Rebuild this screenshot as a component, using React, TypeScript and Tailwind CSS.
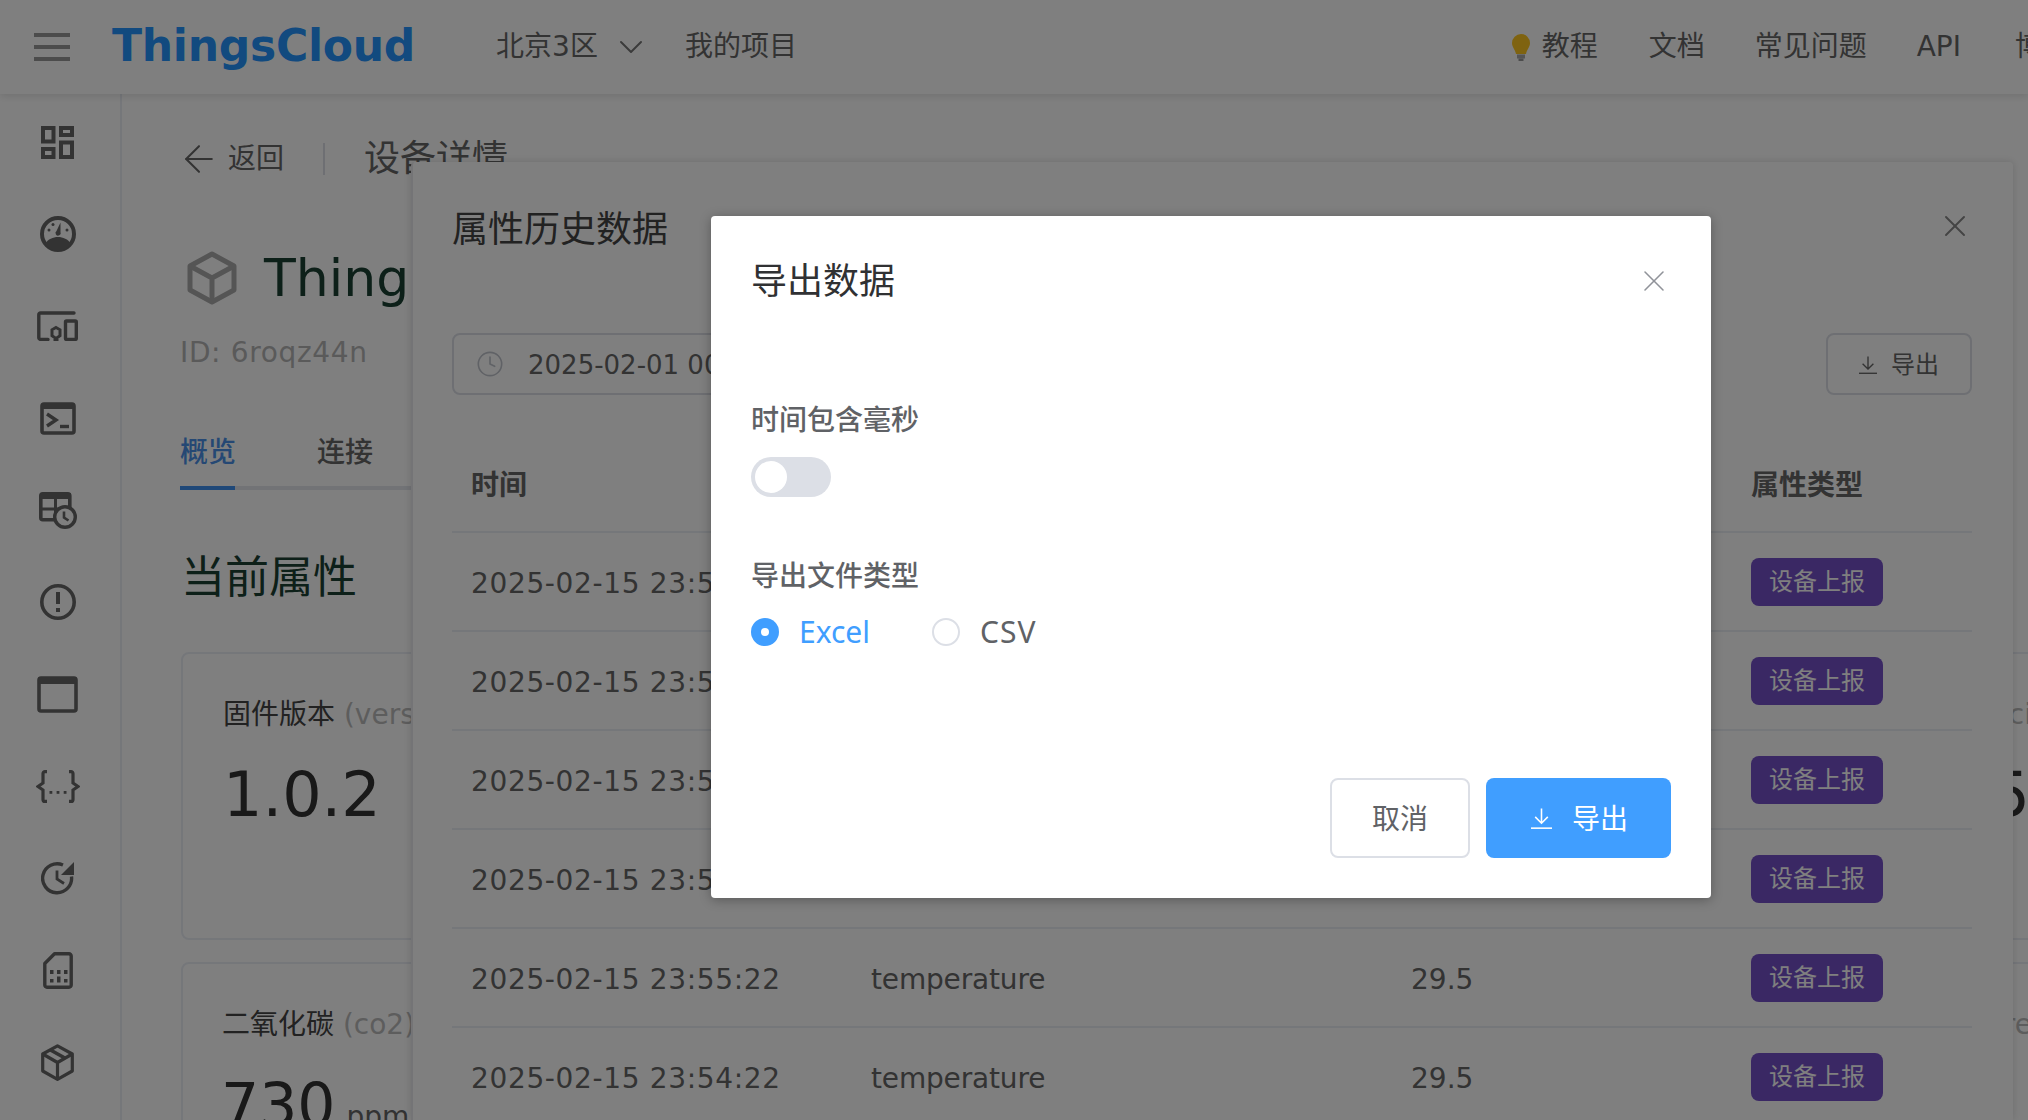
import { ChevronDown, X, ArrowLeft, Clock } from "lucide-react"

const sidebarIcons = [
  <svg key="dash" width="33" height="33" viewBox="0 0 33 33" fill="none" stroke="#666" strokeWidth="4">
    <rect x="2" y="2" width="10.5" height="13.5" />
    <rect x="20" y="2" width="11" height="7" />
    <rect x="2" y="23" width="10.5" height="8" />
    <rect x="20" y="16.5" width="11" height="14.5" />
  </svg>,
  <svg key="gauge" width="36" height="36" viewBox="0 0 36 36" fill="none">
    <circle cx="18" cy="18" r="16" stroke="#666" strokeWidth="4" />
    <path d="M5 28c3-5 8-7 13-7s10 2 13 7c-3 4-8 7-13 7S8 32 5 28z" fill="#666" />
    <path d="M16.500 15 20.500 6.500 20.500 16a2.600 2.600 0 1 1-4-1z" fill="#666" />
    <circle cx="9" cy="14" r="1.500" fill="#666" />
    <circle cx="13" cy="8.500" r="1.500" fill="#666" />
    <circle cx="27" cy="14" r="1.500" fill="#666" />
  </svg>,
  <svg key="devices" width="41" height="30" viewBox="0 0 41 30" fill="none" stroke="#666" strokeWidth="3.400">
    <path d="M37 2H3.500a1.700 1.700 0 0 0-1.700 1.700v23a1.700 1.700 0 0 0 1.700 1.700H11" strokeLinecap="round" />
    <rect x="28.500" y="10" width="10.800" height="18.400" rx="1" />
    <path d="M19 16.500l4 2.300v6l-3 2v2h-2v-2l-3-2v-6z" strokeWidth="3" />
  </svg>,
  <svg key="terminal" width="36" height="33" viewBox="0 0 36 33" fill="none">
    <rect x="2" y="2" width="32" height="29" rx="2" stroke="#666" strokeWidth="3.600" />
    <rect x="2" y="1" width="32" height="6" fill="#666" />
    <path d="M7 12l9 6-9 6" stroke="#666" strokeWidth="3.400" />
    <path d="M20 24.500h9" stroke="#666" strokeWidth="3.400" />
  </svg>,
  <svg key="history-table" width="38" height="37" viewBox="0 0 38 37" fill="none">
    <rect x="1.800" y="1.800" width="29" height="26" rx="2" stroke="#666" strokeWidth="3.600" />
    <rect x="1" y="1" width="31" height="6" fill="#666" />
    <path d="M2 17h26M16.500 3v25" stroke="#666" strokeWidth="3" />
    <circle cx="26" cy="25" r="10.300" fill="#fff" stroke="#666" strokeWidth="3.400" />
    <path d="M25 19.500V25.500l4.500 3" stroke="#666" strokeWidth="2.600" />
  </svg>,
  <svg key="alert" width="36" height="36" viewBox="0 0 36 36" fill="none">
    <circle cx="18" cy="18" r="16.200" stroke="#666" strokeWidth="3.600" />
    <path d="M18 8v12" stroke="#666" strokeWidth="4" />
    <rect x="16" y="24" width="4" height="4" fill="#666" />
  </svg>,
  <svg key="window" width="41" height="37" viewBox="0 0 41 37" fill="none">
    <rect x="2" y="2" width="37" height="33" rx="2" stroke="#666" strokeWidth="3.600" />
    <rect x="1" y="1" width="39" height="7" rx="2" fill="#666" />
  </svg>,
  <svg key="json" width="44" height="33" viewBox="0 0 44 33" fill="none" stroke="#666" strokeWidth="3.200">
    <path d="M11 1.600H9a2 2 0 0 0-2 2V13l-5 3.500L7 20v9.400a2 2 0 0 0 2 2h2" />
    <path d="M33 1.600h2a2 2 0 0 1 2 2V13l5 3.500L37 20v9.400a2 2 0 0 1-2 2h-2" />
    <rect x="13.500" y="21" width="2.800" height="2.800" fill="#666" stroke="none" />
    <rect x="20.600" y="21" width="2.800" height="2.800" fill="#666" stroke="none" />
    <rect x="27.700" y="21" width="2.800" height="2.800" fill="#666" stroke="none" />
  </svg>,
  <svg key="history" width="34" height="34" viewBox="0 0 34 34" fill="none">
    <path d="M30.500 15.500A14.500 14.500 0 1 1 22 4" stroke="#666" strokeWidth="3.400" />
    <path d="M33 1v13H20z" fill="#666" />
    <path d="M16 9.500V18l7 4.500" stroke="#666" strokeWidth="2.800" />
  </svg>,
  <svg key="sim" width="30" height="37" viewBox="0 0 30 37" fill="none">
    <path d="M11.500 1.800H26a2.200 2.200 0 0 1 2.200 2.200v29a2.200 2.200 0 0 1-2.200 2.200H4A2.200 2.200 0 0 1 1.800 33V11.500z" stroke="#666" strokeWidth="3.400" strokeLinejoin="round" />
    <path d="M7 18h3.500v4H7zM14 18h3.500v4H14zM21 18h3.500v4H21zM7 27h3.500v3.500H7zM14 24.500h3.500v6H14zM21 27h3.500v3.500H21z" fill="#666" />
  </svg>,
  <svg key="package" width="33" height="37" viewBox="0 0 33 37" fill="none" stroke="#666" strokeWidth="3.200" strokeLinejoin="round">
    <path d="M16.500 1.800 31.300 10v17l-14.800 8.300L1.700 27V10z" />
    <path d="M1.700 10l14.800 8.500L31.300 10M16.500 18.500v16.800" />
    <path d="M9.500 6l14.800 8.300" strokeWidth="3.600" />
  </svg>,
]

const rows = ["23:59:22", "23:58:22", "23:57:22", "23:56:22", "23:55:22", "23:54:22"]

function ExportIcon({ size, stroke }: { size: number; stroke: string }) {
  return (
    <svg width={size} height={size} viewBox="0 0 20 20" fill="none" stroke={stroke} strokeWidth="1.500">
      <path d="M10 0.500V14M4 8.500l6 6 6-6" />
      <path d="M0 19.200h20" />
    </svg>
  )
}

function PageBehind() {
  return (
    <div className="flex h-[1120px] w-[2028px] flex-col overflow-hidden bg-white font-['DejaVu_Sans','Noto_Sans_CJK_SC',sans-serif]">
      <header className="relative flex h-[94px] shrink-0 items-center bg-white shadow-[0_2px_8px_rgba(0,0,0,0.12)]">
        <div className="ml-[34px] flex w-[36px] flex-col gap-[8px]">
          <div className="h-[4px] bg-[#999]" />
          <div className="h-[4px] bg-[#999]" />
          <div className="h-[4px] bg-[#999]" />
        </div>
        <div className="ml-[42px] -translate-y-[1px] text-[44px] leading-none font-bold tracking-[-0.25px] text-[#2494ff]">ThingsCloud</div>
        <div className="ml-[81px] text-[28px] text-[#666]">北京3区</div>
        <ChevronDown className="ml-[13px]" size={40} strokeWidth={1.2} color="#777" />
        <div className="ml-[34px] text-[28px] text-[#666]">我的项目</div>
        <div className="ml-auto flex items-center text-[28px] text-[#666]">
          <svg width="18" height="27" viewBox="0 0 18 27" className="mr-[12px]">
            <path d="M9 0a9 9 0 0 1 9 9c0 4-3 6-4 11H4C3 15 0 13 0 9a9 9 0 0 1 9-9z" fill="#ffc720" />
            <rect x="5" y="20.500" width="8" height="4" fill="#aaa" />
            <rect x="6.500" y="24.500" width="5" height="2.500" fill="#999" />
          </svg>
          <span>教程</span>
          <span className="ml-[51px]">文档</span>
          <span className="ml-[50px]">常见问题</span>
          <span className="ml-[50px]">API</span>
          <span className="ml-[54px] w-[13px] overflow-hidden whitespace-nowrap">博客</span>
        </div>
      </header>

      <div className="flex min-h-0 flex-1">
        <aside className="flex w-[122px] shrink-0 flex-col border-r-2 border-[#ebeef5] pt-[2px]">
          {sidebarIcons.map((icon, i) => (
            <div key={i} className="flex h-[92px] shrink-0 items-center justify-center pr-[5px]">
              {icon}
            </div>
          ))}
        </aside>

        <main className="min-w-0 flex-1 pl-[59px] text-[#666]">
          <div className="flex h-[130px] items-center">
            <ArrowLeft size={44} strokeWidth={1.1} color="#666" className="-ml-[4px]" />
            <span className="ml-[7px] text-[28px]">返回</span>
            <div className="ml-[39px] h-[32px] w-[2px] bg-[#dcdfe6]" />
            <span className="ml-[39px] text-[36px]">设备详情</span>
          </div>
          <div className="mt-[27px] flex items-center">
            <svg width="50" height="54" viewBox="0 0 50 54" fill="none" stroke="#aaa" strokeWidth="5" strokeLinejoin="round" className="ml-[6px]">
              <path d="M25 3 47 15v24L25 51 3 39V15z" />
              <path d="M3 15l22 12 22-12M25 27v24" />
            </svg>
            <span className="ml-[27px] text-[52px] leading-none text-[#1a4032]">Thing</span>
          </div>
          <div className="mt-[27px] -ml-[1px] text-[28px] tracking-[0.65px] text-[#b4b4b4]">ID: 6roqz44n</div>
          <div className="mt-[58px] -ml-[1px] flex w-[301px] border-b-4 border-[#e4e7ed] text-[28px]">
            <div className="-mb-[4px] w-[55px] shrink-0 border-b-4 border-[#3f90f0] pb-[12px] font-medium whitespace-nowrap text-[#4a90e8]">概览</div>
            <div className="ml-[82px] font-medium whitespace-nowrap">连接</div>
          </div>
          <h2 className="mt-[56px] text-[44px] leading-[64px] text-[#1a4032]">当前属性</h2>

          <div className="mt-[42px] flex gap-[22px]">
            <div className="h-[288px] w-[810px] shrink-0 rounded-[8px] border-2 border-[#ebeef5] pt-[41px] pl-[40px]">
              <div className="text-[28px] leading-[40px] text-[#444]">
                固件版本 <span className="text-[#bbb]">(version)</span>
              </div>
              <div className="mt-[25px] text-[62px] leading-[70px] text-[#333]">1.0.2</div>
            </div>
            <div className="h-[288px] w-[1040px] shrink-0 rounded-[8px] border-2 border-[#ebeef5] pt-[41px] pr-[19px] text-right">
              <div className="text-[28px] leading-[40px] text-[#bbb]">(preci</div>
              <div className="mt-[25px] mr-[2px] text-[62px] leading-[70px] text-[#333]">5</div>
            </div>
          </div>
          <div className="mt-[22px] flex gap-[22px]">
            <div className="h-[288px] w-[810px] shrink-0 rounded-[8px] border-2 border-[#ebeef5] pt-[41px] pl-[39px]">
              <div className="text-[28px] leading-[40px] text-[#444]">
                二氧化碳 <span className="text-[#bbb]">(co2)</span>
              </div>
              <div className="mt-[25px] -ml-[1px] flex items-baseline text-[60px] leading-[70px] text-[#333]">
                730 <span className="ml-[11px] text-[28px] text-[#666]">ppm</span>
              </div>
            </div>
            <div className="h-[288px] w-[1040px] shrink-0 rounded-[8px] border-2 border-[#ebeef5] pt-[41px] pr-[19px] text-right">
              <div className="text-[28px] leading-[40px] text-[#bbb]">(pre</div>
            </div>
          </div>
        </main>
      </div>

      {/* drawer on top of the device page */}
      <section className="absolute top-[162px] left-[411px] h-[958px] w-[1602px] rounded-t-[4px] border-l-2 border-[#e8e8ec] bg-white text-[#666] shadow-[0_0_8px_rgba(0,0,0,0.15)]">
        <div className="flex h-[171px] items-start pt-[45px] pr-[40px] pl-[39px]">
          <h3 className="text-[36px] leading-[46px] text-[#444]">属性历史数据</h3>
          <X className="mt-[1px] ml-auto" size={36} strokeWidth={1.3} color="#888" />
        </div>
        <div className="flex pr-[41px] pl-[39px]">
          <div className="flex h-[62px] w-[600px] items-center rounded-[8px] border-2 border-[#dcdfe6] pl-[22px]">
            <Clock size={28} strokeWidth={1.4} color="#c0c4cc" />
            <span className="ml-[24px] pt-[2px] text-[26px] whitespace-nowrap">2025-02-01 00:00:00</span>
          </div>
          <button className="ml-auto flex h-[62px] w-[146px] items-center justify-center gap-[14px] rounded-[8px] border-2 border-[#dcdfe6] pt-[1px] text-[24px]">
            <ExportIcon size={18} stroke="#666" />
            导出
          </button>
        </div>
        <div className="mt-[38px] mr-[41px] ml-[39px]">
          <div className="grid h-[100px] grid-cols-[400px_540px_340px_1fr] items-center border-b-2 border-[#ebeef5] pt-[8px] pl-[19px] text-[28px] font-bold">
            <div>时间</div>
            <div>属性</div>
            <div>属性值</div>
            <div>属性类型</div>
          </div>
          {rows.map((t) => (
            <div key={t} className="grid h-[99px] grid-cols-[400px_540px_340px_1fr] items-center border-b-2 border-[#ebeef5] pl-[19px] text-[28px]">
              <div className="pt-[4px] tracking-[0.65px]">2025-02-15 {t}</div>
              <div className="pt-[4px] tracking-[-0.16px]">temperature</div>
              <div className="pt-[4px]">29.5</div>
              <div>
                <span className="inline-flex h-[48px] w-[132px] items-center justify-center rounded-[8px] bg-[#7450c8] text-[24px] text-white">设备上报</span>
              </div>
            </div>
          ))}
        </div>
      </section>
    </div>
  )
}

function ExportDialog() {
  return (
    <div className="absolute inset-0 bg-black/50 pt-[216px] pl-[711px]">
      <div className="flex h-[682px] w-[1000px] flex-col rounded-[4px] bg-white px-[40px] pb-[40px] font-['Noto_Sans','Noto_Sans_CJK_SC',sans-serif] shadow-[0_2px_12px_rgba(0,0,0,0.3)]">
        <div className="flex items-center pt-[41px]">
          <h3 className="text-[36px] leading-[48px] text-[#303133]">导出数据</h3>
          <X className="-mr-[1px] ml-auto" size={36} strokeWidth={1.05} color="#909399" />
        </div>
        <div className="mt-[94px] text-[28px] leading-[40px] font-medium text-[#606266]">时间包含毫秒</div>
        <div className="mt-[18px] flex h-[40px] w-[80px] items-center rounded-full bg-[#dcdfe6] pl-[4px]">
          <div className="h-[32px] w-[32px] rounded-full bg-white" />
        </div>
        <div className="mt-[58px] text-[28px] leading-[40px] font-medium text-[#606266]">导出文件类型</div>
        <div className="mt-[17px] flex items-center text-[30px] leading-[40px]">
          <div className="flex h-[28px] w-[28px] items-center justify-center rounded-full bg-[#409eff]">
            <div className="h-[8px] w-[8px] rounded-full bg-white" />
          </div>
          <span className="ml-[20px] w-[133px] text-[#409eff]">Excel</span>
          <div className="h-[28px] w-[28px] rounded-full border-2 border-[#dcdfe6]" />
          <span className="ml-[20px] tracking-[1px] text-[#606266]">CSV</span>
        </div>
        <div className="mt-auto flex justify-end gap-[16px] text-[28px]">
          <button className="h-[80px] w-[140px] rounded-[8px] border-2 border-[#dcdfe6] bg-white text-[#606266]">取消</button>
          <button className="flex h-[80px] w-[185px] items-center justify-center gap-[20px] rounded-[8px] bg-[#409eff] pl-[2px] text-white">
            <ExportIcon size={21} stroke="#fff" />
            导出
          </button>
        </div>
      </div>
    </div>
  )
}

export default function App() {
  return (
    <div className="relative h-[1120px] w-[2028px] overflow-hidden">
      <PageBehind />
      <ExportDialog />
    </div>
  )
}
